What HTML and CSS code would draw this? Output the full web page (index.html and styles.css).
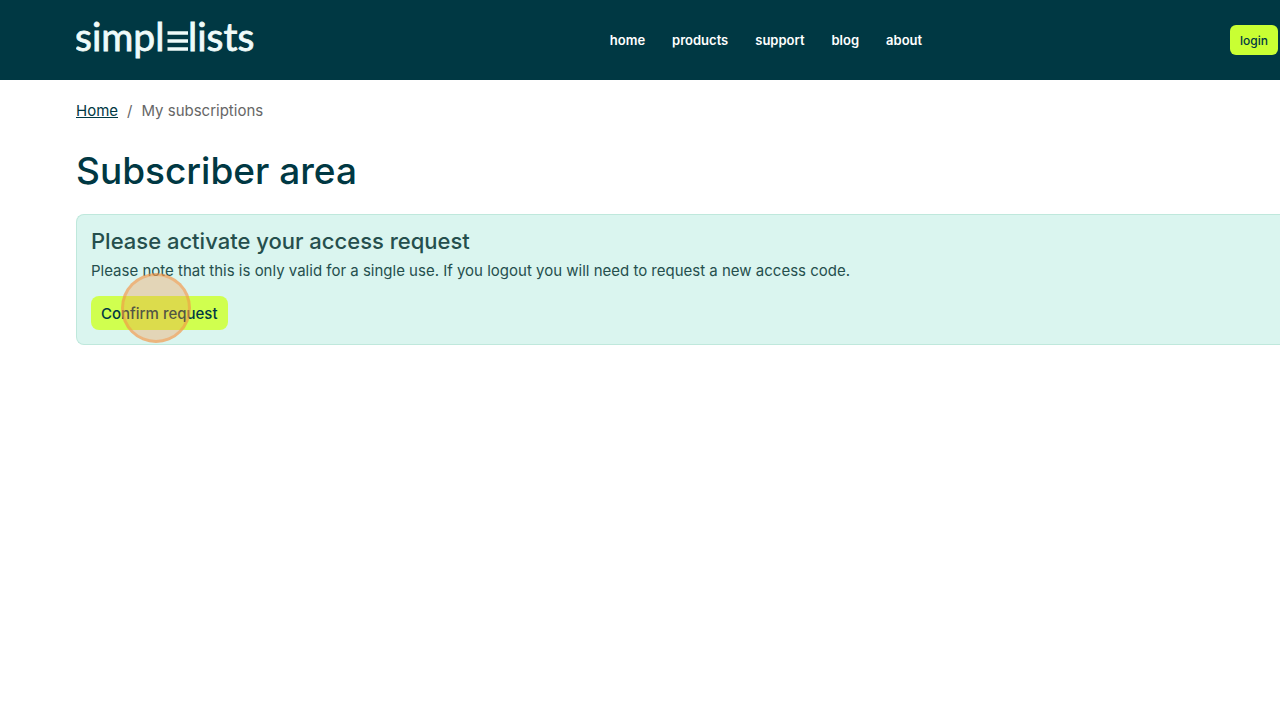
FILE: index.html
```html
<!DOCTYPE html>
<html lang="en">
<head>
    <meta charset="UTF-8">
    <meta name="viewport" content="width=device-width, initial-scale=1.0">
    <title>Subscriber area - Simplelists</title>
    <link rel="stylesheet" href="styles.css">
</head>
<body>

    <header class="header">
        <a class="logo" href="#" aria-label="simplelists">
            <svg width="184" height="60" viewBox="0 0 184 60">
                <text class="logo-text" x="-1" y="41">simpl</text>
                <path d="M91.5 23h20.5M91.5 31h20.5M91.5 39h20.5" stroke="#effbfa" stroke-width="3.4"/>
                <text class="logo-text" x="112" y="41">lists</text>
            </svg>
        </a>
        <nav class="nav">
            <a href="#">home</a>
            <a href="#">products</a>
            <a href="#">support</a>
            <a href="#">blog</a>
            <a href="#">about</a>
        </nav>
        <button class="btn btn-login" type="button">login</button>
    </header>

    <main class="main">
        <nav class="breadcrumb" aria-label="breadcrumb">
            <a href="#">Home</a>
            <span class="slash">/</span>
            <span>My subscriptions</span>
        </nav>

        <h1>Subscriber area</h1>

        <section class="alert">
            <h2>Please activate your access request</h2>
            <p>Please note that this is only valid for a single use. If you logout you will need to request a new access code.</p>
            <div class="action">
                <button class="btn btn-confirm" type="button">Confirm request</button>
                <span class="click-marker"></span>
            </div>
        </section>
    </main>

</body>
</html>
```
FILE: styles.css
```css
* {
    box-sizing: border-box;
}
body {
    font-family: Inter, sans-serif;
    font-size: 15px;
    line-height: 22px;
    color: #003843;
    background-color: #fff;
    margin: 0;
}
.header {
    display: grid;
    grid-template-columns: 3fr auto 2fr;
    align-items: center;
    height: 80px;
    padding: 0 2px 0 76px;
    background-color: #003843;
}
.logo svg {
    display: block;
}
.logo-text {
    font-family: Lato, sans-serif;
    font-size: 39px;
    fill: #effbfa;
    stroke: #effbfa;
    stroke-width: 0.8;
}
.nav {
    display: flex;
    gap: 27px;
    font-size: 13px;
    line-height: 20px;
    font-weight: 600;
}
.nav a {
    color: #fff;
    text-decoration: none;
}
.btn {
    font-family: inherit;
    font-weight: 500;
    color: #003843;
    border: none;
    border-radius: 8px;
    cursor: pointer;
}
.btn-login {
    justify-self: end;
    height: 30px;
    padding: 0 10px;
    font-size: 12px;
    border-radius: 6px;
    background-color: #c9ff33;
}
.main {
    padding: 20px 0 0 76px;
}
.breadcrumb {
    display: flex;
    gap: 9px;
    color: #666;
}
.breadcrumb a {
    color: #003843;
}
h1 {
    margin: 26px 0 20px;
    font-size: 37px;
    line-height: 46px;
    font-weight: 500;
}
.alert {
    padding: 14px;
    color: #254f4d;
    background-color: #daf5ef;
    border: 1px solid #bfe8dc;
    border-right: none;
    border-radius: 8px 0 0 8px;
}
.alert h2 {
    margin: 0 0 6px;
    font-size: 22px;
    line-height: 25px;
    font-weight: 500;
}
.alert p {
    margin: 0 0 14px;
}
.action {
    display: flex;
    position: relative;
}
.btn-confirm {
    height: 34px;
    padding: 0 10px;
    font-size: 15px;
    background-color: #d0ff4f;
}
.click-marker {
    position: absolute;
    left: 30px;
    top: -23px;
    width: 70px;
    height: 70px;
    border: 3px solid rgba(245, 150, 70, 0.5);
    border-radius: 50%;
    background-color: rgba(245, 150, 70, 0.33);
    pointer-events: none;
}
```
